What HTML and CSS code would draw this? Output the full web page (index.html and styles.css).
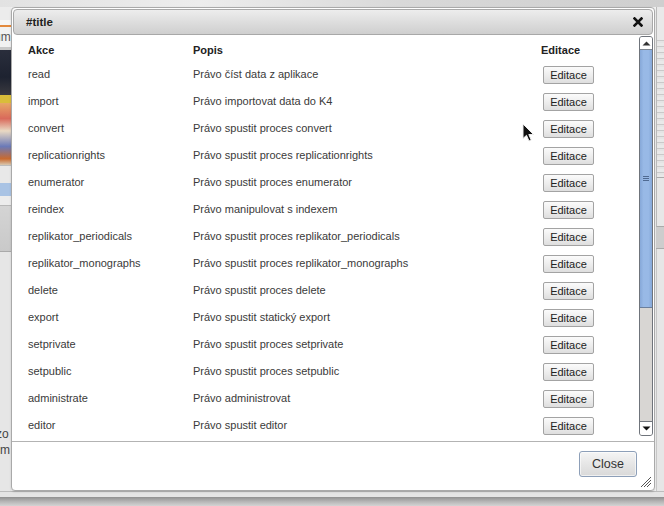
FILE: index.html
```html
<!DOCTYPE html>
<html lang="cs">
<head>
<meta charset="utf-8">
<title>Práva</title>
<link rel="stylesheet" href="styles.css">
</head>
<body>
<div class="page">
  <div class="bg-top"></div>
  <div class="bg-mid">
    <div class="bg-left">
      <div class="bl bl-a"></div>
      <div class="bl bl-white"></div>
      <div class="bl bl-orange"></div>
      <div class="bl bl-text">um</div>
      <div class="bl bl-line"></div>
      <div class="bl bl-dark"></div>
      <div class="bl bl-yellow"></div>
      <div class="bl bl-img"></div>
      <div class="bl bl-light"></div>
      <div class="bl bl-blue"></div>
      <div class="bl bl-light2"></div>
      <div class="bl bl-grey"></div>
      <div class="bl bl-fill"></div>
      <div class="bl bl-text2">zo<br>m</div>
      <div class="bl bl-end"></div>
    </div>
    <div class="bg-center"></div>
    <div class="bg-right">
      <div class="br br-a"></div>
      <div class="br br-text"></div>
      <div class="br br-lines"></div>
      <div class="br br-grey"></div>
      <div class="br br-fill"></div>
    </div>
  </div>
  <div class="bg-bottom">
    <div class="bg-bottom-strip"></div>
    <div class="bg-bottom-grad"></div>
  </div>

  <div class="dialog">
    <div class="titlebar">
      <span class="title">#title</span>
      <svg class="close-x" width="10" height="10" viewBox="0 0 10 10"><path d="M1.5 1.5 L8.5 8.5 M8.5 1.5 L1.5 8.5" stroke="#111" stroke-width="2.6" stroke-linecap="square"/></svg>
    </div>
    <div class="body">
      <div class="table-wrap">
        <div class="grid">
          <div class="th">Akce</div><div class="th">Popis</div><div class="th">Editace</div>

          <div class="td">read</div><div class="td">Právo číst data z aplikace</div><div class="td"><button class="edit">Editace</button></div>
          <div class="td">import</div><div class="td">Právo importovat data do K4</div><div class="td"><button class="edit">Editace</button></div>
          <div class="td">convert</div><div class="td">Právo spustit proces convert</div><div class="td"><button class="edit">Editace</button></div>
          <div class="td">replicationrights</div><div class="td">Právo spustit proces replicationrights</div><div class="td"><button class="edit">Editace</button></div>
          <div class="td">enumerator</div><div class="td">Právo spustit proces enumerator</div><div class="td"><button class="edit">Editace</button></div>
          <div class="td">reindex</div><div class="td">Právo manipulovat s indexem</div><div class="td"><button class="edit">Editace</button></div>
          <div class="td">replikator_periodicals</div><div class="td">Právo spustit proces replikator_periodicals</div><div class="td"><button class="edit">Editace</button></div>
          <div class="td">replikator_monographs</div><div class="td">Právo spustit proces replikator_monographs</div><div class="td"><button class="edit">Editace</button></div>
          <div class="td">delete</div><div class="td">Právo spustit proces delete</div><div class="td"><button class="edit">Editace</button></div>
          <div class="td">export</div><div class="td">Právo spustit statický export</div><div class="td"><button class="edit">Editace</button></div>
          <div class="td">setprivate</div><div class="td">Právo spustit proces setprivate</div><div class="td"><button class="edit">Editace</button></div>
          <div class="td">setpublic</div><div class="td">Právo spustit proces setpublic</div><div class="td"><button class="edit">Editace</button></div>
          <div class="td">administrate</div><div class="td">Právo administrovat</div><div class="td"><button class="edit">Editace</button></div>
          <div class="td">editor</div><div class="td">Právo spustit editor</div><div class="td"><button class="edit">Editace</button></div>
        </div>
      </div>
      <div class="scrollbar">
        <div class="sb-btn sb-up"><svg width="9" height="5" viewBox="0 0 9 5"><path d="M0.5 4.5 L4.5 0.5 L8.5 4.5 Z" fill="#333"/></svg></div>
        <div class="sb-thumb"><span class="grip"></span></div>
        <div class="sb-track"></div>
        <div class="sb-btn sb-down"><svg width="9" height="5" viewBox="0 0 9 5"><path d="M0.5 0.5 L8.5 0.5 L4.5 4.5 Z" fill="#111"/></svg></div>
      </div>
    </div>
    <div class="buttonpane">
      <button class="close-btn">Close</button>
    </div>
    <svg class="resize" width="12" height="12" viewBox="0 0 12 12"><path d="M1 11 L11 1 M4 11 L11 4 M7 11 L11 7" stroke="#555" stroke-width="1"/></svg>
  </div>

  <svg class="cursor" width="14" height="20" viewBox="0 0 14 20"><path d="M1 1 L1 15.5 L4.5 12.3 L7 18 L9.2 17 L6.8 11.5 L11.5 11.5 Z" fill="#111" stroke="#eee" stroke-width="1" stroke-linejoin="round"/></svg>
</div>
</body>
</html>
```

FILE: styles.css
```css
* { box-sizing: border-box; }
html, body {
  margin: 0;
  padding: 0;
}
body {
  width: 664px;
  height: 506px;
  overflow: hidden;
  font-family: "Liberation Sans", Arial, sans-serif;
  background: #e6e6e6;
}
.page {
  position: relative;
  width: 664px;
  height: 506px;
  display: flex;
  flex-direction: column;
}

/* ---------- background page ---------- */
.bg-top {
  height: 7px;
  background: linear-gradient(90deg, #e2e2e2, #ededed 30%, #d9d9d9 60%, #cfcfcf 100%);
}
.bg-mid {
  height: 484px;
  display: flex;
}
.bg-left {
  width: 11px;
  display: flex;
  flex-direction: column;
  background: #e6e6e6;
}
.bl { flex: none; }
.bl-a { height: 13px; background: #ececec; }
.bl-white { height: 5px; background: #f6f6f6; }
.bl-orange { height: 2px; background: #e38a3e; }
.bl-text {
  height: 20px;
  background: #f2f2f2;
  font-size: 12px;
  line-height: 20px;
  color: #555;
  text-indent: -6px;
  overflow: hidden;
  white-space: nowrap;
}
.bl-line { height: 3px; background: #c8c8c8; }
.bl-dark { height: 45px; background: linear-gradient(180deg, #2a2e3c, #1d2230 60%, #3a3a40); }
.bl-yellow { height: 8px; background: #d9bd3a; }
.bl-img { height: 62px; background: linear-gradient(180deg, #e7a766, #d96a5b 25%, #e9d9c3 45%, #6b7ab8 70%, #c96a2f 90%, #d9c8b0); }
.bl-light { height: 18px; background: #e8e8e8; border-top: 1px solid #bdbdbd; }
.bl-blue { height: 13px; background: #a9c3e4; }
.bl-light2 { height: 10px; background: #ececec; border-bottom: 1px solid #b8b8b8; }
.bl-grey { height: 46px; background: linear-gradient(180deg, #d4d4d4, #c9c9c9); border-bottom: 1px solid #aaa; }
.bl-fill { height: 174px; background: #e6e6e6; }
.bl-text2 {
  height: 34px;
  font-size: 12px;
  line-height: 16px;
  color: #444;
  text-indent: -4px;
  white-space: nowrap;
  overflow: hidden;
  background: #e6e6e6;
}
.bl-end { flex: 1; background: #e6e6e6; }
.bg-center { flex: 1; background: #f2f2f2; }
.bg-right {
  width: 8px;
  display: flex;
  flex-direction: column;
  background: #e6e6e6;
}
.br { flex: none; }
.br-a { height: 30px; background: #e9e9e9; border-left: 1px solid #bbb; }
.br-text {
  height: 140px;
  background: repeating-linear-gradient(180deg, #e9e9e9 0 3px, #c9c9c9 3px 4px, #e4e4e4 4px 6px);
  border-left: 1px solid #bbb;
}
.br-lines { height: 50px; background: #e7e7e7; border-top: 1px solid #aaa; border-bottom: 1px solid #aaa; border-left: 1px solid #bbb; }
.br-grey { height: 22px; background: #cdcdcd; border-bottom: 1px solid #aaa; }
.br-fill { flex: 1; background: #e6e6e6; border-left: 1px solid #c9c9c9; }

.bg-bottom {
  height: 15px;
  display: flex;
  flex-direction: column;
}
.bg-bottom-strip { height: 6px; background: #e4e4e4; border-top: 1px solid #bcbcbc; }
.bg-bottom-grad { flex: 1; background: linear-gradient(180deg, #8f8f8f, #b5b5b5 50%, #d4d4d4); }

/* ---------- dialog ---------- */
.dialog {
  position: absolute;
  left: 11px;
  top: 7px;
  width: 644px;
  height: 484px;
  border: 1px solid #a9a9a9;
  border-radius: 4px;
  background: #fff;
  display: flex;
  flex-direction: column;
  box-shadow: 0 1px 2px rgba(0,0,0,0.15);
}
.titlebar {
  margin: 1px 1px 0;
  height: 26px;
  border: 1px solid #a8a8a8;
  border-radius: 4px;
  background: linear-gradient(180deg, #ededed, #dcdcdc 55%, #cfcfcf);
  display: flex;
  align-items: center;
  justify-content: space-between;
  padding: 0 9px 0 12px;
}
.title {
  font-weight: bold;
  font-size: 11.5px;
  color: #222;
}
.close-x { display: block; }

.body {
  margin: 1px 1px 0;
  height: 400px;
  display: flex;
}
.table-wrap {
  flex: 1;
  overflow: hidden;
  padding-top: 1px;
}
.grid {
  display: grid;
  grid-template-columns: 165px 348px 1fr;
  grid-auto-rows: 27px;
  grid-template-rows: 24px;
  padding-left: 15px;
  font-size: 11px;
  line-height: 13px;
}
.th {
  font-weight: bold;
  color: #222;
  padding-top: 7px;
}
.td {
  color: #3a3a3a;
  display: flex;
  align-items: center;
  white-space: nowrap;
}
.edit {
  margin: 0 0 0 2px;
  width: 51px;
  height: 18px;
  padding: 0;
  font-family: "Liberation Sans", Arial, sans-serif;
  font-size: 11px;
  color: #222;
  border: 1px solid #a3a3a3;
  border-radius: 2px;
  background: linear-gradient(180deg, #fbfbfb, #ebebeb 60%, #dedede);
}

.scrollbar {
  width: 14px;
  display: flex;
  flex-direction: column;
  border: 1px solid #6f747b;
  border-radius: 3px;
  overflow: hidden;
  background: #d6d4d1;
}
.sb-btn {
  height: 13px;
  flex: none;
  background: #fff;
  display: flex;
  align-items: center;
  justify-content: center;
}
.sb-up { border-bottom: 1px solid #7d8590; }
.sb-down { border-top: 1px solid #6f747b; height: 14px; }
.sb-thumb {
  height: 258px;
  flex: none;
  background: linear-gradient(90deg, #86a8d8, #98b9e6 30%, #98b9e6 70%, #86a8d8);
  border-bottom: 1px solid #6b7f9c;
  display: flex;
  align-items: center;
  justify-content: center;
}
.grip {
  width: 6px;
  height: 5px;
  border-top: 1px solid #4f6a92;
  border-bottom: 1px solid #4f6a92;
  position: relative;
}
.grip::after {
  content: "";
  display: block;
  margin-top: 1px;
  height: 1px;
  background: #4f6a92;
}
.sb-track { flex: 1; background: #d8d6d3; }

.buttonpane {
  margin-top: 5px;
  flex: 1;
  border-top: 1px solid #b3b3b3;
  display: flex;
  justify-content: flex-end;
  align-items: flex-start;
  padding: 9px 17px 0 0;
}
.close-btn {
  width: 58px;
  height: 26px;
  padding: 0;
  font-family: "Liberation Sans", Arial, sans-serif;
  font-size: 12.5px;
  color: #333;
  border: 1px solid #8d9fb8;
  border-radius: 3px;
  background: linear-gradient(180deg, #f5f5f5, #e6e6e6 50%, #d9d9d9);
  box-shadow: inset 0 0 0 1px rgba(255,255,255,0.6);
}
.resize {
  position: absolute;
  right: 2px;
  bottom: 2px;
}
.cursor {
  position: absolute;
  left: 522px;
  top: 123px;
}
```
